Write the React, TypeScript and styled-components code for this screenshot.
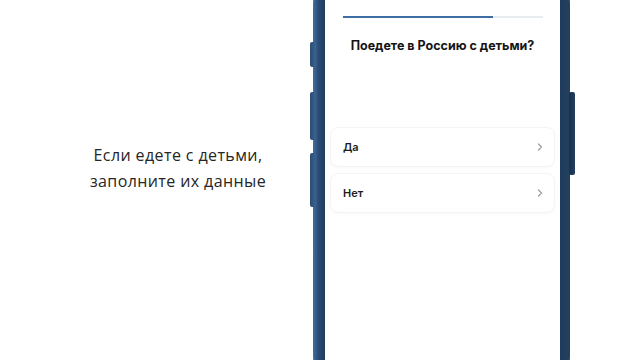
import React from 'react';
import styled, { createGlobalStyle } from 'styled-components';

const GlobalStyle = createGlobalStyle`
    html, body {
        margin: 0;
        padding: 0;
        background: #ffffff;
    }
    * {
        box-sizing: border-box;
    }
`;

const Page = styled.div`
    width: 640px;
    height: 360px;
    overflow: hidden;
    display: flex;
    align-items: center;
    padding-left: 78px;
    background: #ffffff;
`;

const Caption = styled.div`
    width: 200px;
    margin-right: 32px;
    margin-bottom: 24px;
    text-align: center;
    font-family: "Open Sans", "Noto Sans", sans-serif;
    font-size: 16px;
    line-height: 26px;
    color: #262626;
    letter-spacing: 0.4px;
`;

const Phone = styled.div`
    position: relative;
    flex: 0 0 auto;
    width: 265px;
    height: 440px;
    padding: 0 5px 0 3px;
    display: flex;
    flex-direction: column;
    align-items: stretch;
`;

const Frame = styled.div`
    flex: 1;
    border-radius: 44px;
    background: linear-gradient(90deg, #44709f 0%, #2a4d76 2%, #1f3b5b 5%, #1f3b5b 95%, #22405f 100%);
    padding: 0 10px 0 12px;
    display: flex;
`;

const Screen = styled.div`
    flex: 1;
    background: #ffffff;
    border-radius: 34px;
    padding: 56px 5px 0 5px;
    display: flex;
    flex-direction: column;
`;

interface ISideButton {
    side: 'left' | 'right';
    top: number;
    size: number;
}

const SideButton = styled.div<ISideButton>`
    position: absolute;
    top: ${props => props.top}px;
    height: ${props => props.size}px;
    width: 6px;
    border-radius: 2px;
    ${props => props.side === 'left'
        ? `
        left: 0;
        background: linear-gradient(90deg, #2a4c74, #3b6591);
        `
        : `
        right: 0;
        background: linear-gradient(90deg, #1a2f47, #233f5f);
        `}
`;

const Progress = styled.div`
    margin: 0 12px 0 13px;
    height: 2px;
    background: #e9ecef;
    display: flex;
`;

const ProgressFill = styled.div`
    height: 100%;
    background: #3d6ea3;
`;

const Title = styled.div`
    margin-top: 20px;
    text-align: center;
    font-family: Inter, "Noto Sans", sans-serif;
    font-weight: 700;
    font-size: 12.5px;
    line-height: 16px;
    color: #141414;
`;

const Options = styled.div`
    margin-top: 73px;
    display: flex;
    flex-direction: column;
    gap: 6px;
`;

const Option = styled.div`
    height: 40px;
    border-radius: 8px;
    background: #ffffff;
    border: 1px solid #f3f4f6;
    box-shadow: 0 1px 3px rgba(0, 0, 0, 0.03);
    display: flex;
    align-items: center;
    justify-content: space-between;
    padding: 0 10px 0 12px;
    font-family: Inter, "Noto Sans", sans-serif;
    font-weight: 600;
    font-size: 11px;
    color: #1c1c1c;
`;

const Chevron = () => (
    <svg width="8" height="10" viewBox="0 0 8 10" fill="none">
        <path d="M2.5 2 L5.5 5 L2.5 8" stroke="#9aa0a6" strokeWidth="1.3" strokeLinecap="round" strokeLinejoin="round" />
    </svg>
);

const options = ['Да', 'Нет'];

const App = () => {
    const progress = 75;

    return (
        <>
            <GlobalStyle />
            <Page>
                <Caption>
                    Если едете с детьми,<br />заполните их данные
                </Caption>
                <Phone>
                    <SideButton side="left" top={82} size={25} />
                    <SideButton side="left" top={132} size={48} />
                    <SideButton side="left" top={193} size={54} />
                    <SideButton side="right" top={132} size={83} />
                    <Frame>
                        <Screen>
                            <Progress>
                                <ProgressFill style={{ width: `${progress}%` }} />
                            </Progress>
                            <Title>Поедете в Россию с детьми?</Title>
                            <Options>
                                {options.map(opt =>
                                    <Option key={opt}>
                                        {opt}
                                        <Chevron />
                                    </Option>
                                )}
                            </Options>
                        </Screen>
                    </Frame>
                </Phone>
            </Page>
        </>
    );
};

export default App;
